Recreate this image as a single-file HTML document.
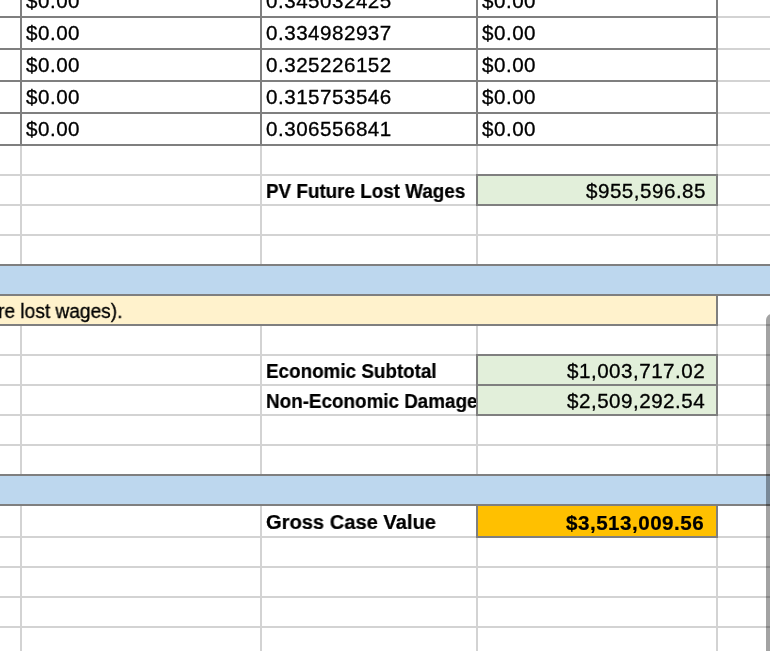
<!DOCTYPE html>
<html><head><meta charset="utf-8"><title>Sheet</title>
<style>
html,body{margin:0;padding:0;background:#fff;}
body{width:770px;height:651px;position:relative;overflow:hidden;font-family:"Liberation Sans",sans-serif;}
#s{position:absolute;left:0;top:0;width:770px;height:651px;overflow:hidden;background:#fff;}
#s>div{position:absolute;}
.t{position:absolute;white-space:nowrap;line-height:normal;display:block;will-change:transform;}
</style></head><body><div id="s">
<div style="left:20px;top:0px;width:2px;height:651px;background:#d3d3d3;"></div>
<div style="left:260px;top:0px;width:2px;height:651px;background:#d3d3d3;"></div>
<div style="left:476px;top:0px;width:2px;height:651px;background:#d3d3d3;"></div>
<div style="left:716px;top:0px;width:2px;height:651px;background:#d3d3d3;"></div>
<div style="left:0px;top:16px;width:770px;height:2px;background:#d3d3d3;"></div>
<div style="left:0px;top:48px;width:770px;height:2px;background:#d3d3d3;"></div>
<div style="left:0px;top:80px;width:770px;height:2px;background:#d3d3d3;"></div>
<div style="left:0px;top:112px;width:770px;height:2px;background:#d3d3d3;"></div>
<div style="left:0px;top:144px;width:770px;height:2px;background:#d3d3d3;"></div>
<div style="left:0px;top:174px;width:770px;height:2px;background:#d3d3d3;"></div>
<div style="left:0px;top:204px;width:770px;height:2px;background:#d3d3d3;"></div>
<div style="left:0px;top:234px;width:770px;height:2px;background:#d3d3d3;"></div>
<div style="left:0px;top:264px;width:770px;height:2px;background:#d3d3d3;"></div>
<div style="left:0px;top:294px;width:770px;height:2px;background:#d3d3d3;"></div>
<div style="left:0px;top:324px;width:770px;height:2px;background:#d3d3d3;"></div>
<div style="left:0px;top:354px;width:770px;height:2px;background:#d3d3d3;"></div>
<div style="left:0px;top:384px;width:770px;height:2px;background:#d3d3d3;"></div>
<div style="left:0px;top:414px;width:770px;height:2px;background:#d3d3d3;"></div>
<div style="left:0px;top:444px;width:770px;height:2px;background:#d3d3d3;"></div>
<div style="left:0px;top:474px;width:770px;height:2px;background:#d3d3d3;"></div>
<div style="left:0px;top:504px;width:770px;height:2px;background:#d3d3d3;"></div>
<div style="left:0px;top:536px;width:770px;height:2px;background:#d3d3d3;"></div>
<div style="left:0px;top:566px;width:770px;height:2px;background:#d3d3d3;"></div>
<div style="left:0px;top:596px;width:770px;height:2px;background:#d3d3d3;"></div>
<div style="left:0px;top:626px;width:770px;height:2px;background:#d3d3d3;"></div>
<div style="left:20px;top:0px;width:2px;height:146px;background:#7f7f7f;"></div>
<div style="left:260px;top:0px;width:2px;height:146px;background:#7f7f7f;"></div>
<div style="left:476px;top:0px;width:2px;height:146px;background:#7f7f7f;"></div>
<div style="left:716px;top:0px;width:2px;height:146px;background:#7f7f7f;"></div>
<div style="left:0px;top:16px;width:718px;height:2px;background:#7f7f7f;"></div>
<div style="left:0px;top:48px;width:718px;height:2px;background:#7f7f7f;"></div>
<div style="left:0px;top:80px;width:718px;height:2px;background:#7f7f7f;"></div>
<div style="left:0px;top:112px;width:718px;height:2px;background:#7f7f7f;"></div>
<div style="left:0px;top:144px;width:718px;height:2px;background:#7f7f7f;"></div>
<div style="left:0px;top:264px;width:770px;height:32px;background:#7f7f7f;"></div>
<div style="left:0px;top:266px;width:770px;height:28px;background:#bdd7ee;"></div>
<div style="left:0px;top:474px;width:770px;height:32px;background:#7f7f7f;"></div>
<div style="left:0px;top:476px;width:770px;height:28px;background:#bdd7ee;"></div>
<div style="left:0px;top:294px;width:718px;height:32px;background:#7f7f7f;"></div>
<div style="left:0px;top:296px;width:716px;height:28px;background:#fff2cc;"></div>
<div style="left:476px;top:174px;width:242px;height:32px;background:#7f7f7f;"></div>
<div style="left:478px;top:176px;width:238px;height:28px;background:#e2efda;"></div>
<div style="left:476px;top:354px;width:242px;height:62px;background:#7f7f7f;"></div>
<div style="left:478px;top:356px;width:238px;height:28px;background:#e2efda;"></div>
<div style="left:478px;top:386px;width:238px;height:28px;background:#e2efda;"></div>
<div style="left:476px;top:504px;width:242px;height:34px;background:#7f7f7f;"></div>
<div style="left:478px;top:506px;width:238px;height:30px;background:#ffc000;"></div>
<span class="t" style="left:26px;top:-10.64px;font-size:20.6px;font-weight:400;letter-spacing:0.5px;color:#000;-webkit-text-stroke:0.32px #000;">$0.00</span>
<span class="t" style="left:265.5px;top:-10.64px;font-size:20.6px;font-weight:400;letter-spacing:0.5px;color:#000;-webkit-text-stroke:0.32px #000;">0.345032425</span>
<span class="t" style="left:482px;top:-10.64px;font-size:20.6px;font-weight:400;letter-spacing:0.5px;color:#000;-webkit-text-stroke:0.32px #000;">$0.00</span>
<span class="t" style="left:26px;top:21.36px;font-size:20.6px;font-weight:400;letter-spacing:0.5px;color:#000;-webkit-text-stroke:0.32px #000;">$0.00</span>
<span class="t" style="left:265.5px;top:21.36px;font-size:20.6px;font-weight:400;letter-spacing:0.5px;color:#000;-webkit-text-stroke:0.32px #000;">0.334982937</span>
<span class="t" style="left:482px;top:21.36px;font-size:20.6px;font-weight:400;letter-spacing:0.5px;color:#000;-webkit-text-stroke:0.32px #000;">$0.00</span>
<span class="t" style="left:26px;top:53.36px;font-size:20.6px;font-weight:400;letter-spacing:0.5px;color:#000;-webkit-text-stroke:0.32px #000;">$0.00</span>
<span class="t" style="left:265.5px;top:53.36px;font-size:20.6px;font-weight:400;letter-spacing:0.5px;color:#000;-webkit-text-stroke:0.32px #000;">0.325226152</span>
<span class="t" style="left:482px;top:53.36px;font-size:20.6px;font-weight:400;letter-spacing:0.5px;color:#000;-webkit-text-stroke:0.32px #000;">$0.00</span>
<span class="t" style="left:26px;top:85.36px;font-size:20.6px;font-weight:400;letter-spacing:0.5px;color:#000;-webkit-text-stroke:0.32px #000;">$0.00</span>
<span class="t" style="left:265.5px;top:85.36px;font-size:20.6px;font-weight:400;letter-spacing:0.5px;color:#000;-webkit-text-stroke:0.32px #000;">0.315753546</span>
<span class="t" style="left:482px;top:85.36px;font-size:20.6px;font-weight:400;letter-spacing:0.5px;color:#000;-webkit-text-stroke:0.32px #000;">$0.00</span>
<span class="t" style="left:26px;top:117.36px;font-size:20.6px;font-weight:400;letter-spacing:0.5px;color:#000;-webkit-text-stroke:0.32px #000;">$0.00</span>
<span class="t" style="left:265.5px;top:117.36px;font-size:20.6px;font-weight:400;letter-spacing:0.5px;color:#000;-webkit-text-stroke:0.32px #000;">0.306556841</span>
<span class="t" style="left:482px;top:117.36px;font-size:20.6px;font-weight:400;letter-spacing:0.5px;color:#000;-webkit-text-stroke:0.32px #000;">$0.00</span>
<span class="t" style="left:265.6px;top:179.50px;font-size:20.0px;font-weight:700;letter-spacing:0px;color:#000;-webkit-text-stroke:0.22px #000;transform:scaleX(0.942);transform-origin:left center;">PV Future Lost Wages</span>
<span class="t" style="right:64.39999999999998px;top:178.96px;font-size:20.6px;font-weight:400;letter-spacing:0.5px;color:#000;-webkit-text-stroke:0.32px #000;">$955,596.85</span>
<span class="t" style="left:-1.6px;top:299.50px;font-size:20.0px;font-weight:400;letter-spacing:0px;color:#000;-webkit-text-stroke:0.32px #000;transform:scaleX(0.957);transform-origin:left center;">re lost wages).</span>
<span class="t" style="left:266.2px;top:359.50px;font-size:20.0px;font-weight:700;letter-spacing:0px;color:#000;-webkit-text-stroke:0.22px #000;transform:scaleX(0.942);transform-origin:left center;">Economic Subtotal</span>
<span class="t" style="left:266.2px;top:389.50px;font-size:20.0px;font-weight:700;letter-spacing:0px;color:#000;-webkit-text-stroke:0.22px #000;transform:scaleX(0.942);transform-origin:left center;width:222.7px;overflow:hidden;">Non-Economic Damages</span>
<span class="t" style="right:64.39999999999998px;top:358.96px;font-size:20.6px;font-weight:400;letter-spacing:0.5px;color:#000;-webkit-text-stroke:0.32px #000;">$1,003,717.02</span>
<span class="t" style="right:64.39999999999998px;top:388.96px;font-size:20.6px;font-weight:400;letter-spacing:0.5px;color:#000;-webkit-text-stroke:0.32px #000;">$2,509,292.54</span>
<span class="t" style="left:265.6px;top:511.33px;font-size:20.3px;font-weight:700;letter-spacing:0px;color:#000;-webkit-text-stroke:0.22px #000;transform:scaleX(0.992);transform-origin:left center;">Gross Case Value</span>
<span class="t" style="right:65.39999999999998px;top:510.86px;font-size:20.6px;font-weight:700;letter-spacing:0.5px;color:#000;-webkit-text-stroke:0.22px #000;">$3,513,009.56</span>
<div style="left:766px;top:314px;width:12px;height:400px;border-radius:6px;background:rgba(0,0,0,0.36);"></div>
</div></body></html>
